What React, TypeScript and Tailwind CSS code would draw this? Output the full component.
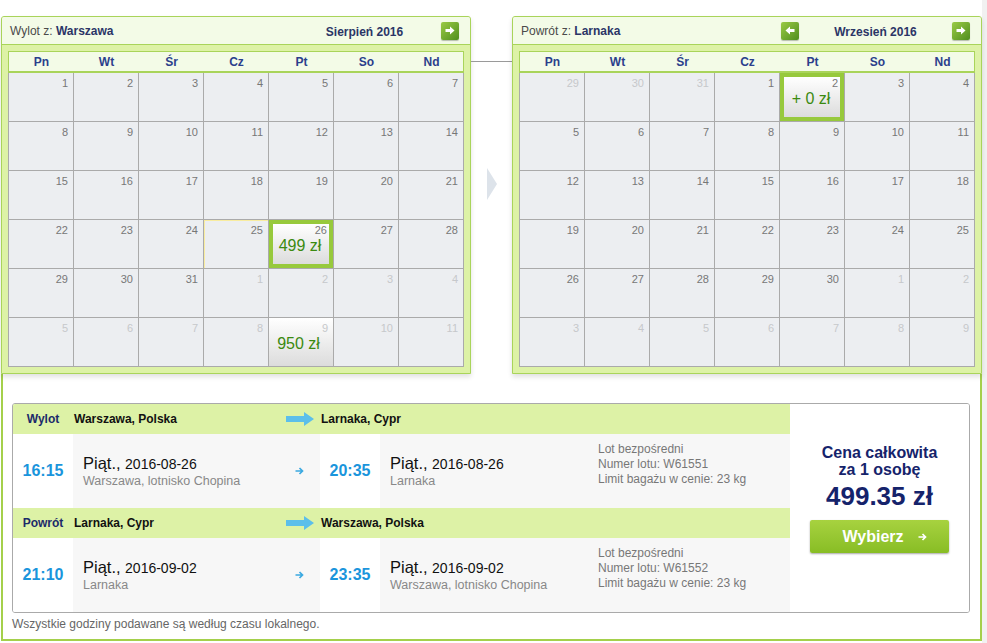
import React from 'react';

type Day = { d: number; muted?: boolean; price?: string; selected?: boolean; shade?: boolean; edge?: boolean };

const DAY_NAMES = ['Pn', 'Wt', 'Śr', 'Cz', 'Pt', 'So', 'Nd'];

const range = (a: number, b: number, muted = false): Day[] =>
  Array.from({ length: b - a + 1 }, (_, i) => ({ d: a + i, muted }));

const augustDays: Day[] = [...range(1, 31), ...range(1, 11, true)];
augustDays[24].edge = true;
augustDays[25] = { d: 26, price: '499 zł', selected: true };
augustDays[39] = { d: 9, muted: true, price: '950 zł', shade: true };

const septemberDays: Day[] = [...range(29, 31, true), ...range(1, 30), ...range(1, 9, true)];
septemberDays[4] = { d: 2, price: '+ 0 zł', selected: true };

const NavButton = ({ dir }: { dir: 'left' | 'right' }) => (
  <span className="flex h-[18px] w-[18px] items-center justify-center rounded-[2px] bg-linear-to-br from-[#9bcb45] to-[#4f8e1e] shadow-[0_1px_1px_rgba(0,0,0,0.25)]">
    <svg width="10" height="9" viewBox="0 0 10 9" className={dir === 'left' ? 'rotate-180' : ''}>
      <path d="M0.5 3h4.5V0.5L9.5 4.5 5 8.5V6H0.5z" fill="#fff" />
    </svg>
  </span>
);

const DayCell = ({ day }: { day: Day }) => {
  const base = 'h-[48px] text-right';
  if (day.selected) {
    return (
      <div className={`${base} border-4 border-[#97c93c] bg-linear-to-b from-white to-[#dcdcdc] pr-[2px]`}>
        <div className="text-[11px] leading-[13px] text-[#777]">{day.d}</div>
        <div className="text-center text-[16px] leading-[18px] text-[#3b8a10]">{day.price}</div>
      </div>
    );
  }
  return (
    <div
      className={`${base} pt-[4px] pr-[5px] ${day.shade ? 'bg-linear-to-b from-white to-[#dcdcdc]' : 'bg-[#eceef1]'} ${
        day.edge ? 'shadow-[inset_1px_1px_0_#f8eca0]' : ''
      }`}
    >
      <div className={`text-[11px] leading-[13px] ${day.muted ? 'text-[#c6c8cb]' : 'text-[#777]'}`}>{day.d}</div>
      {day.price && <div className="text-center text-[16px] leading-[18px] text-[#3b8a10]">{day.price}</div>}
    </div>
  );
};

const CalendarPanel = ({
  label,
  city,
  month,
  days,
  showPrev,
}: {
  label: string;
  city: string;
  month: string;
  days: Day[];
  showPrev: boolean;
}) => (
  <div className="w-[470px] overflow-hidden rounded-t-[3px] border border-[#a9d45a] bg-[#ddf2a6] shadow-[0_3px_5px_rgba(0,0,0,0.12)]">
    <div className="flex h-[28px] items-center justify-between border-b border-[#a9d45a] bg-[#f3fbe7] pr-[11px] pl-[8px] text-[12px]">
      <div>
        <span className="text-[#4a4a4a]">{label}</span> <span className="font-bold text-[#2b3566]">{city}</span>
      </div>
      <div className="flex items-center">
        {showPrev ? <NavButton dir="left" /> : <span className="w-[18px]" />}
        <span className="w-[153px] pt-[3px] text-center font-bold text-[#2b3566]">{month}</span>
        <NavButton dir="right" />
      </div>
    </div>
    <div className="px-[6px] pt-[6px] pb-[6px]">
      <div className="grid h-[22px] grid-cols-[repeat(7,65px)] items-center border border-b-2 border-[#a9d45a] bg-[#f3fbe7] text-center text-[12px] font-bold text-[#2b3f8c]">
        {DAY_NAMES.map(n => (
          <span key={n}>{n}</span>
        ))}
      </div>
      <div className="grid grid-cols-[repeat(7,64px)] gap-px bg-[#aaaaaa] px-px pb-px">
        {days.map((day, i) => (
          <DayCell key={i} day={day} />
        ))}
      </div>
    </div>
  </div>
);

const BigArrow = () => (
  <svg width="28" height="14" viewBox="0 0 28 14">
    <path d="M0 4h18V0l10 7-10 7v-4H0z" fill="#5cbfea" />
  </svg>
);

const SmallArrow = ({ color }: { color: string }) => (
  <svg width="9" height="8" viewBox="0 0 9 8">
    <path d="M0.5 4h7M4.5 1l3 3-3 3" stroke={color} strokeWidth="1.7" fill="none" />
  </svg>
);

type Leg = {
  label: string;
  from: string;
  to: string;
  depTime: string;
  depDate: string;
  depPlace: string;
  arrTime: string;
  arrDate: string;
  arrPlace: string;
  flight: string;
};

const legs: Leg[] = [
  {
    label: 'Wylot',
    from: 'Warszawa, Polska',
    to: 'Larnaka, Cypr',
    depTime: '16:15',
    depDate: '2016-08-26',
    depPlace: 'Warszawa, lotnisko Chopina',
    arrTime: '20:35',
    arrDate: '2016-08-26',
    arrPlace: 'Larnaka',
    flight: 'W61551',
  },
  {
    label: 'Powrót',
    from: 'Larnaka, Cypr',
    to: 'Warszawa, Polska',
    depTime: '21:10',
    depDate: '2016-09-02',
    depPlace: 'Larnaka',
    arrTime: '23:35',
    arrDate: '2016-09-02',
    arrPlace: 'Warszawa, lotnisko Chopina',
    flight: 'W61552',
  },
];

const DateBlock = ({ date, place }: { date: string; place: string }) => (
  <div>
    <div className="leading-[19px] text-[#111]">
      <span className="text-[16.5px]">Piąt.,</span> <span className="text-[14px]">{date}</span>
    </div>
    <div className="text-[12.5px] leading-[15px] text-[#888]">{place}</div>
  </div>
);

const LegRows = ({ leg }: { leg: Leg }) => (
  <>
    <div className="flex h-[30px] items-center bg-[#ddf2a6] text-[12px] font-bold">
      <span className="w-[60px] text-center text-[#1c2a6a]">{leg.label}</span>
      <span className="flex w-[247px] items-center justify-between pr-[6px] pl-px text-[#111]">
        {leg.from}
        <BigArrow />
      </span>
      <span className="pl-px text-[#111]">{leg.to}</span>
    </div>
    <div className="flex h-[74px]">
      <div className="flex w-[60px] items-center justify-center bg-white text-[16px] font-bold text-[#1a95dc]">{leg.depTime}</div>
      <div className="flex w-[247px] items-center justify-between bg-[#f7f7f7] pr-[16px] pl-[10px]">
        <DateBlock date={leg.depDate} place={leg.depPlace} />
        <SmallArrow color="#3ba9e1" />
      </div>
      <div className="flex w-[60px] items-center justify-center bg-white text-[16px] font-bold text-[#1a95dc]">{leg.arrTime}</div>
      <div className="flex flex-1 bg-[#f7f7f7] pl-[10px]">
        <div className="flex w-[208px] items-center">
          <DateBlock date={leg.arrDate} place={leg.arrPlace} />
        </div>
        <div className="pt-[8px] text-[12px] leading-[15px] text-[#777]">
          <div>Lot bezpośredni</div>
          <div>Numer lotu: {leg.flight}</div>
          <div>Limit bagażu w cenie: 23 kg</div>
        </div>
      </div>
    </div>
  </>
);

export default function App() {
  return (
    <div className="flex min-h-screen bg-[#f1f1f1] font-['Liberation_Sans',Arial,sans-serif]">
      <div className="w-[982px] bg-white">
        <div className="flex pt-[16px] pl-px">
          <CalendarPanel label="Wylot z:" city="Warszawa" month="Sierpień 2016" days={augustDays} showPrev={false} />
          <div className="flex w-[41px] flex-col items-center">
            <div className="mt-[45px] h-px w-full bg-[#9a9a9a]" />
            <svg width="10" height="32" viewBox="0 0 10 32" className="mt-[106px]">
              <path d="M0 0l10 16L0 32z" fill="#dde3ea" />
            </svg>
          </div>
          <CalendarPanel label="Powrót z:" city="Larnaka" month="Wrzesień 2016" days={septemberDays} showPrev />
        </div>
        <div className="ml-px h-[267px] border-x-2 border-b-2 border-[#a4d04b] pt-[29px] pl-[9px]">
          <div className="flex w-[958px] overflow-hidden rounded-[3px] border border-[#aaaaaa]">
            <div className="w-[777px]">
              {legs.map(l => (
                <LegRows key={l.label} leg={l} />
              ))}
            </div>
            <div className="flex flex-1 flex-col items-center bg-white pt-[41px] font-bold text-[#15236b]">
              <div className="text-[16px] leading-[16px]">Cena całkowita</div>
              <div className="text-[16px] leading-[17px]">za 1 osobę</div>
              <div className="mt-[3px] text-[26px] leading-[30px]">499.35 zł</div>
              <button className="mt-[9px] flex h-[33px] w-[139px] items-center justify-center gap-[14px] rounded-[2px] bg-linear-to-b from-[#a7d23f] to-[#88bd24] pl-[10px] text-[16px] font-bold text-white shadow-[0_1px_2px_rgba(0,0,0,0.35)]">
                Wybierz
                <SmallArrow color="#ffffff" />
              </button>
            </div>
          </div>
          <p className="mt-[4px] text-[12px] leading-[14px] text-[#666]">Wszystkie godziny podawane są według czasu lokalnego.</p>
        </div>
      </div>
    </div>
  );
}
